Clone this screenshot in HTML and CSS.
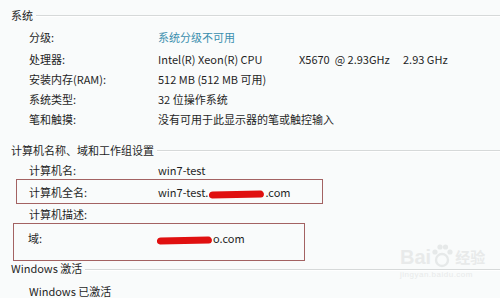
FILE: index.html
```html
<!DOCTYPE html>
<html>
<head>
<meta charset="utf-8">
<link rel="stylesheet" href="styles.css">
</head>
<body>
<div class="page">
  <div class="hdr h1"><span class="hdr-text">系统</span><span class="hdr-line"></span></div>
  <div class="sys">
    <div class="row r1"><span class="lbl">分级:</span><span class="val link">系统分级不可用</span></div>
    <div class="row"><span class="lbl">处理器:</span><span class="val cpu"><span class="c1">Intel(R) Xeon(R) CPU</span><span class="c2">X5670&nbsp; @ 2.93GHz</span><span class="c3">2.93 GHz</span></span></div>
    <div class="row"><span class="lbl">安装内存(RAM):</span><span class="val">512 MB (512 MB 可用)</span></div>
    <div class="row"><span class="lbl">系统类型:</span><span class="val">32 位操作系统</span></div>
    <div class="row"><span class="lbl">笔和触摸:</span><span class="val">没有可用于此显示器的笔或触控输入</span></div>
  </div>

  <div class="hdr h2"><span class="hdr-text">计算机名称、域和工作组设置</span><span class="hdr-line"></span></div>
  <div class="row rn"><span class="lbl">计算机名:</span><span class="val">win7-test</span></div>
  <div class="box box1">
    <div class="row rb"><span class="lbl">计算机全名:</span><span class="val">win7-test.<span class="blot b1"></span>.com</span></div>
  </div>
  <div class="row rn"><span class="lbl">计算机描述:</span><span class="val"></span></div>
  <div class="box box2">
    <div class="row rb"><span class="lbl">域:</span><span class="val"><span class="blot b2"></span>o.com</span></div>
  </div>

  <div class="hdr h3"><span class="hdr-text">Windows 激活</span><span class="hdr-line"></span></div>
  <div class="row ra"><span class="lbl">Windows 已激活</span></div>

  <div class="wm">
    <div class="wm-main"><span class="wm-bai">Bai</span><svg class="paw" width="22" height="26" viewBox="0 0 22 26"><ellipse cx="11" cy="18" rx="6" ry="6" fill="none" stroke="#e6e9e9" stroke-width="2.4"/><circle cx="4" cy="10" r="2.6" fill="#e6e9e9"/><circle cx="9" cy="5" r="2.6" fill="#e6e9e9"/><circle cx="14.5" cy="5" r="2.6" fill="#e6e9e9"/><circle cx="19" cy="10" r="2.6" fill="#e6e9e9"/></svg><span class="wm-jy">经验</span></div>
    <div class="wm-url">jingyan.baidu.com</div>
  </div>
</div>
</body>
</html>
```

FILE: styles.css
```css
html, body {
  margin: 0;
  padding: 0;
  background: #f9fbfb;
}
.page {
  position: relative;
  width: 500px;
  height: 298px;
  overflow: hidden;
  font-family: "Noto Sans CJK SC", "Noto Sans", sans-serif;
  font-size: 11px;
  color: #1f1f1f;
}
.hdr {
  display: flex;
  align-items: center;
  padding-left: 11px;
  height: 20px;
}
.hdr-text {
  white-space: nowrap;
  padding-right: 3px;
}
.hdr-line {
  flex: 1;
  height: 1px;
  background: #d6d9d9;
  border-bottom: 1px solid #ffffff;
  margin-top: 2px;
}
.h1 {
  margin-top: 5px;
}
.sys {
  margin-top: 2px;
}
.r1 {
  margin-bottom: 2px;
}
.row {
  display: grid;
  grid-template-columns: 129px 1fr;
  height: 20px;
  line-height: 20px;
  margin-left: 29px;
  white-space: nowrap;
}
.link {
  color: #3b8fae;
}
.cpu {
  display: flex;
}
.c1 { width: 141px; }
.c2 { width: 104px; }
.h2 {
  margin-top: 11px;
}
.rn {
  height: 18px;
  line-height: 18px;
  margin-top: 1px;
}
.box {
  border: 1.5px solid #a36262;
  box-sizing: border-box;
}
.box1 {
  margin-left: 16px;
  width: 307px;
  height: 25px;
  padding-top: 2px;
}
.box1 .rb {
  margin-left: 12px;
}
.box2 {
  margin-left: 13px;
  width: 292px;
  height: 38px;
  padding-top: 5px;
}
.box2 .rb {
  margin-left: 14px;
  height: 18px;
  line-height: 18px;
}
.blot {
  display: inline-block;
  background: #e01010;
  border-radius: 4px 6px 3px 5px;
  vertical-align: middle;
  transform: skewX(-12deg) rotate(-1deg);
}
.b1 {
  width: 55px;
  height: 7px;
  margin: 0 1px;
}
.b2 {
  width: 55px;
  height: 7px;
  margin-right: 1px;
}
.h3 {
  height: 14px;
  margin-top: 0;
}
.h3 .hdr-line {
  margin-top: 4px;
}
.ra {
  margin-top: 6px;
  display: block;
}
.wm {
  position: absolute;
  left: 400px;
  top: 242px;
  color: #e8eaea;
}
.wm-main {
  display: flex;
  align-items: flex-end;
  font-family: "Liberation Sans", sans-serif;
  font-size: 20px;
  font-weight: bold;
  line-height: 22px;
}
.wm-jy {
  font-family: "Noto Sans CJK SC", sans-serif;
  font-size: 15px;
  margin-left: 2px;
}
.wm-url {
  font-family: "Liberation Sans", sans-serif;
  font-size: 8px;
  margin-top: 2px;
  letter-spacing: 0.5px;
}
```
